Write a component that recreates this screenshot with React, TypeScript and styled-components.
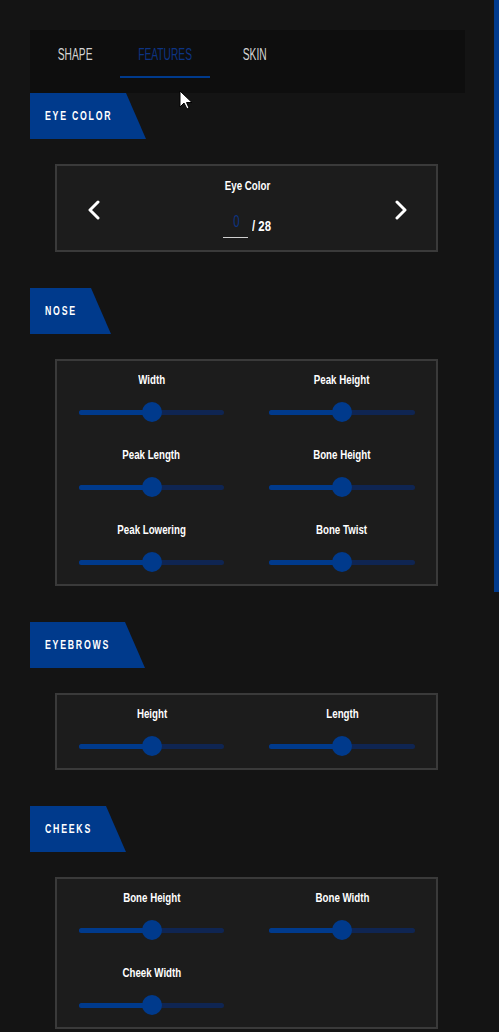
import React from "react";
import styled, { createGlobalStyle } from "styled-components";

const BLUE = "#003a8c";

const GlobalStyle = createGlobalStyle`
  html, body {
    margin: 0;
    background: #141414;
    font-family: "Liberation Sans", Arial, sans-serif;
    color: #fff;
  }
  * { box-sizing: border-box; }
`;

// the UI font is a tall condensed face; squeeze Liberation Sans to match it
const Narrow = styled.span<{ $scale?: number; $origin?: string }>`
  display: inline-block;
  white-space: nowrap;
  transform: scaleX(${(p) => p.$scale ?? 0.72});
  transform-origin: ${(p) => p.$origin ?? "center"};
`;

const Page = styled.div`
  width: 499px;
  padding: 30px 34px 0 30px;
`;

const TabBar = styled.div`
  display: flex;
  height: 63px;
  background: #0e0e0e;
`;

const Tab = styled.div<{ $active?: boolean }>`
  width: 90px;
  height: 48px;
  padding-top: 4px;
  display: flex;
  align-items: center;
  justify-content: center;
  font-size: 16px;
  text-transform: uppercase;
  color: ${(p) => (p.$active ? "#0d3483" : "#d4d4d4")};
  border-bottom: 2px solid ${(p) => (p.$active ? BLUE : "transparent")};
`;

const SectionHeader = styled.div<{ $width: number }>`
  display: flex;
  align-items: center;
  width: ${(p) => p.$width}px;
  height: 46px;
  padding-left: 15px;
  background: ${BLUE};
  clip-path: polygon(0 0, calc(100% - 20px) 0, 100% 100%, 0 100%);
  font-size: 12px;
  font-weight: 700;
  letter-spacing: 2.4px;
  text-transform: uppercase;
  color: #fff;
`;

const Card = styled.div`
  margin: 25px 27px 36px 25px;
  border: 2px solid #3a3a3a;
  background: #1c1c1c;
`;

const Picker = styled.div`
  display: flex;
  align-items: center;
  justify-content: space-between;
  padding: 11px 29px 12px 31px;
`;

const ArrowButton = styled.button`
  background: none;
  border: 0;
  padding: 0;
  width: 12px;
  height: 20px;
  display: flex;
  cursor: pointer;
  margin-top: 4px;
`;

const PickerCenter = styled.div`
  display: flex;
  flex-direction: column;
  align-items: center;
`;

const Label = styled.div`
  font-size: 13.5px;
  font-weight: 700;
  line-height: 18px;
  color: #fff;
`;

const Counter = styled.div`
  display: flex;
  align-items: flex-end;
  margin-top: 16px;
  gap: 4px;
`;

const IndexInput = styled.div`
  width: 25px;
  height: 27px;
  border-bottom: 1px solid #cfcfcf;
  color: #0d3483;
  font-size: 16px;
  line-height: 22px;
  text-align: center;
`;

const Total = styled.span`
  font-size: 15px;
  font-weight: 700;
  line-height: 18px;
  padding-bottom: 3px;
  margin-right: -6px;
`;

const SliderGrid = styled.div`
  display: grid;
  grid-template-columns: 145px 146px;
  column-gap: 45px;
  row-gap: 24px;
  padding: 10px 21px 12px 22px;
`;

const Control = styled.div`
  display: flex;
  flex-direction: column;
  align-items: center;
  gap: 13px;
`;

const Track = styled.div`
  position: relative;
  width: 100%;
  height: 20px;
  display: flex;
  align-items: center;
  &::before {
    content: "";
    width: 100%;
    height: 5px;
    border-radius: 3px;
    background: #0f2552;
  }
`;

const Fill = styled.div`
  position: absolute;
  left: 0;
  top: 7.5px;
  height: 5px;
  border-radius: 3px;
  background: ${BLUE};
`;

const Thumb = styled.div`
  position: absolute;
  top: 0;
  width: 20px;
  height: 20px;
  margin-left: -10px;
  border-radius: 50%;
  background: ${BLUE};
`;

const ScrollThumb = styled.div`
  position: fixed;
  top: 0;
  right: 0;
  width: 5px;
  height: 592px;
  background: ${BLUE};
`;

const Pointer = styled.svg`
  position: fixed;
  left: 179px;
  top: 90px;
`;

type SliderProps = { label: string; value?: number };

const Slider: React.FC<SliderProps> = ({ label, value = 50 }) => (
  <Control>
    <Label>
      <Narrow>{label}</Narrow>
    </Label>
    <Track>
      <Fill style={{ width: `${value}%` }} />
      <Thumb style={{ left: `${value}%` }} />
    </Track>
  </Control>
);

const Chevron: React.FC<{ dir: "left" | "right" }> = ({ dir }) => (
  <svg width="12" height="20" viewBox="0 0 12 20">
    <path
      d={dir === "left" ? "M10 2 L2 10 L10 18" : "M2 2 L10 10 L2 18"}
      fill="none"
      stroke="#fff"
      strokeWidth="3"
      strokeLinecap="round"
      strokeLinejoin="round"
    />
  </svg>
);

const sections: { title: string; width: number; sliders: string[] }[] = [
  {
    title: "Nose",
    width: 81,
    sliders: ["Width", "Peak Height", "Peak Length", "Bone Height", "Peak Lowering", "Bone Twist"],
  },
  { title: "Eyebrows", width: 115, sliders: ["Height", "Length"] },
  { title: "Cheeks", width: 96, sliders: ["Bone Height", "Bone Width", "Cheek Width"] },
];

export default function App() {
  return (
    <>
      <GlobalStyle />
      <Page>
        <TabBar>
          <Tab>
            <Narrow $scale={0.64}>Shape</Narrow>
          </Tab>
          <Tab $active>
            <Narrow $scale={0.64}>Features</Narrow>
          </Tab>
          <Tab>
            <Narrow $scale={0.64}>Skin</Narrow>
          </Tab>
        </TabBar>

        <SectionHeader $width={116}>
          <Narrow $scale={0.73} $origin="left">
            Eye Color
          </Narrow>
        </SectionHeader>
        <Card>
          <Picker>
            <ArrowButton>
              <Chevron dir="left" />
            </ArrowButton>
            <PickerCenter>
              <Label>
                <Narrow>Eye Color</Narrow>
              </Label>
              <Counter>
                <IndexInput>
                  <Narrow>0</Narrow>
                </IndexInput>
                <Total>
                  <Narrow $scale={0.76} $origin="left">
                    / 28
                  </Narrow>
                </Total>
              </Counter>
            </PickerCenter>
            <ArrowButton>
              <Chevron dir="right" />
            </ArrowButton>
          </Picker>
        </Card>

        {sections.map((s) => (
          <div key={s.title}>
            <SectionHeader $width={s.width}>
              <Narrow $scale={0.73} $origin="left">
                {s.title}
              </Narrow>
            </SectionHeader>
            <Card>
              <SliderGrid>
                {s.sliders.map((l) => (
                  <Slider key={l} label={l} />
                ))}
              </SliderGrid>
            </Card>
          </div>
        ))}
      </Page>
      <ScrollThumb />
      <Pointer width="14" height="20" viewBox="0 0 14 20">
        <path d="M1 1 L1 17 L5 13 L8 19 L10 18 L7.5 12.5 L13 12.5 Z" fill="#fff" stroke="#000" strokeWidth="1" />
      </Pointer>
    </>
  );
}
